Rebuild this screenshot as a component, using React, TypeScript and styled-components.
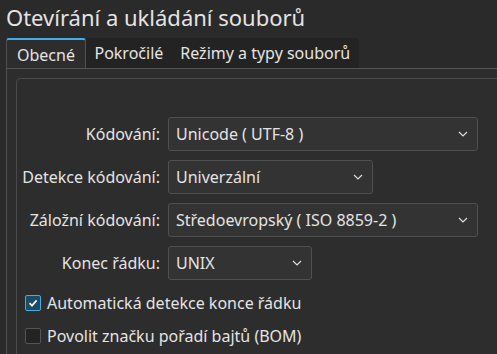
import styled, { createGlobalStyle } from "styled-components";

const GlobalStyle = createGlobalStyle`
  html, body {
    margin: 0;
    padding: 0;
    background: #2a2a2a;
  }
  * {
    box-sizing: border-box;
  }
`;

const Chevron = () => (
  <svg width="10" height="6" viewBox="0 0 10 6">
    <path d="M1 1 L5 5 L9 1" fill="none" stroke="#dcdcdc" strokeWidth="1.2" />
  </svg>
);

const Check = () => (
  <svg width="12" height="12" viewBox="0 0 12 12">
    <path d="M2.5 6.2 L5 8.6 L9.6 3.4" fill="none" stroke="#f0f0f0" strokeWidth="1.8" />
  </svg>
);

type ComboProps = { value: string; width: number };

const Combo = ({ value, width }: ComboProps) => (
  <ComboBox $width={width}>
    <span>{value}</span>
    <Chevron />
  </ComboBox>
);

const App = () => {
  return (
    <>
      <GlobalStyle />
      <Window>
        <Title>Otevírání a ukládání souborů</Title>
        <TabBar>
          <Tab $active>Obecné</Tab>
          <InactiveTabs>
            <Tab>Pokročilé</Tab>
            <Tab>Režimy a typy souborů</Tab>
          </InactiveTabs>
        </TabBar>
        <Panel>
          <GroupBox>
            <Form>
              <Label>Kódování:</Label>
              <Combo value="Unicode ( UTF-8 )" width={310} />
              <Label>Detekce kódování:</Label>
              <Combo value="Univerzální" width={205} />
              <Label>Záložní kódování:</Label>
              <Combo value="Středoevropský ( ISO 8859-2 )" width={310} />
              <Label>Konec řádku:</Label>
              <Combo value="UNIX" width={144} />
            </Form>
            <CheckList>
              <CheckRow>
                <CheckBox $checked>
                  <Check />
                </CheckBox>
                Automatická detekce konce řádku
              </CheckRow>
              <CheckRow>
                <CheckBox />
                Povolit značku pořadí bajtů (BOM)
              </CheckRow>
            </CheckList>
          </GroupBox>
        </Panel>
      </Window>
    </>
  );
};

export default App;

const Window = styled.div`
  width: 497px;
  height: 354px;
  overflow: hidden;
  background: #2a2a2a;
  color: #e4e4e4;
  font-family: "Noto Sans", "Open Sans", sans-serif;
`;

const Title = styled.div`
  font-size: 22px;
  line-height: 28px;
  padding: 3px 0 0 6px;
  height: 38px;
`;

const TabBar = styled.div`
  display: flex;
  height: 31px;
  margin-left: 6px;
`;

const InactiveTabs = styled.div`
  display: flex;
  background: #232323;
  border-top-right-radius: 4px;
  height: 31px;
  border-bottom: 1px solid #555555;
`;

const Tab = styled.div<{ $active?: boolean }>`
  display: flex;
  align-items: center;
  font-size: 16px;
  padding: ${(p) => (p.$active ? "1px 10px 0 10px" : "0 8.5px")};
  background: ${(p) => (p.$active ? "#2d2d2d" : "transparent")};
  border-top: ${(p) => (p.$active ? "2px solid #3daee9" : "none")};
  border-left: ${(p) => (p.$active ? "1px solid #505050" : "none")};
  border-right: ${(p) => (p.$active ? "1px solid #505050" : "none")};
  border-top-left-radius: ${(p) => (p.$active ? "3px" : "0")};
  border-top-right-radius: ${(p) => (p.$active ? "3px" : "0")};
`;

const Panel = styled.div`
  margin-left: 6px;
  margin-top: -1px;
  border-left: 1px solid #505050;
  border-top: 1px solid #555555;
  background: #2d2d2d;
  padding: 9px 0 0 9px;
  height: 300px;
  position: relative;
  z-index: 0;
`;

const GroupBox = styled.div`
  border: 1px solid #4a4a4a;
  border-radius: 4px;
  margin-right: -20px;
  height: 320px;
  padding: 38px 0 0 0;
`;

const Form = styled.div`
  display: grid;
  grid-template-columns: 143px auto;
  column-gap: 8px;
  row-gap: 9px;
  justify-content: start;
  align-items: center;
`;

const Label = styled.div`
  font-size: 16px;
  text-align: right;
  white-space: nowrap;
`;

const ComboBox = styled.div<{ $width: number }>`
  width: ${(p) => p.$width}px;
  height: 34px;
  display: flex;
  align-items: center;
  justify-content: space-between;
  padding: 0 9px 0 7px;
  background: #333333;
  border: 1px solid #4f4f4f;
  border-radius: 3px;
  font-size: 16px;
  white-space: nowrap;
`;

const CheckList = styled.div`
  display: flex;
  flex-direction: column;
  gap: 9px;
  padding: 11px 0 0 8px;
`;

const CheckRow = styled.div`
  display: flex;
  align-items: center;
  gap: 6px;
  font-size: 16px;
  height: 24px;
`;

const CheckBox = styled.div<{ $checked?: boolean }>`
  width: 16px;
  height: 16px;
  border-radius: 2px;
  display: flex;
  align-items: center;
  justify-content: center;
  background: ${(p) => (p.$checked ? "#1e4a62" : "#232323")};
  border: 1px solid ${(p) => (p.$checked ? "#3daee9" : "#555555")};
`;
